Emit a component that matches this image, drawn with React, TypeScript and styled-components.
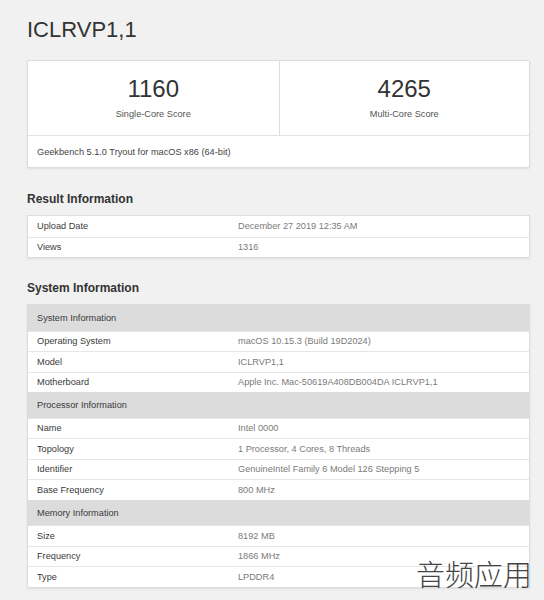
import styled, { createGlobalStyle } from "styled-components";

const GlobalStyle = createGlobalStyle`
  html, body {
    margin: 0;
    padding: 0;
    background-color: #f1f1f1;
    font-family: "Liberation Sans", Arial, sans-serif;
    color: #333333;
  }
`;

const Page = styled.div`
  position: relative;
  display: flex;
  flex-direction: column;
  min-height: 600px;
  padding: 17px 14px 0 27px;
  box-sizing: border-box;
`;

const Title = styled.h1`
  margin: 0;
  font-size: 22px;
  line-height: 26px;
  font-weight: 400;
  color: #333333;
`;

const Card = styled.div`
  margin-top: 17px;
  background-color: #ffffff;
  border: 1px solid #dddddd;
  border-radius: 2px;
  box-shadow: 0 1px 2px rgba(0, 0, 0, 0.08);
`;

const ScoreRow = styled.div`
  display: grid;
  grid-template-columns: 1fr 1fr;
`;

const ScoreCell = styled.div`
  display: flex;
  flex-direction: column;
  align-items: center;
  padding: 14px 0 15px;
  gap: 5px;
  & + & {
    border-left: 1px solid #dddddd;
  }
`;

const ScoreValue = styled.span`
  font-size: 24px;
  line-height: 28px;
  color: #333333;
`;

const ScoreLabel = styled.span`
  font-size: 9.2px;
  line-height: 12px;
  color: #555555;
`;

const CardFooter = styled.div`
  display: flex;
  align-items: center;
  height: 31px;
  padding-left: 9px;
  border-top: 1px solid #e3e3e3;
  font-size: 9.2px;
  color: #444444;
`;

const SectionTitle = styled.h2<{ $top: number }>`
  margin: ${(p) => p.$top}px 0 8px;
  font-size: 12px;
  line-height: 16px;
  font-weight: 700;
  color: #333333;
`;

const Table = styled.div`
  background-color: #ffffff;
  border: 1px solid #dddddd;
  box-shadow: 0 1px 2px rgba(0, 0, 0, 0.08);
`;

const Row = styled.div<{ $header?: boolean }>`
  display: grid;
  grid-template-columns: 201px 1fr;
  align-items: center;
  box-sizing: border-box;
  height: ${(p) => (p.$header ? "25.5px" : "20.5px")};
  padding-left: 9px;
  background-color: ${(p) => (p.$header ? "#dcdcdc" : "#ffffff")};
  border-top: 1px solid ${(p) => (p.$header ? "#dcdcdc" : "#e6e6e6")};
  font-size: 9.2px;
  &:first-child {
    border-top: none;
  }
`;

const Label = styled.span`
  color: #3a3a3a;
`;

const Value = styled.span`
  color: #7a7a7a;
`;

const Watermark = styled.div`
  position: absolute;
  left: 416px;
  top: 556px;
  font-family: "Noto Sans CJK SC", sans-serif;
  font-weight: 200;
  font-size: 29px;
  line-height: 34px;
  color: #444444;
  pointer-events: none;
`;

type Entry = { label: string; value?: string; header?: boolean };

const resultInfo: Entry[] = [
  { label: "Upload Date", value: "December 27 2019 12:35 AM" },
  { label: "Views", value: "1316" },
];

const systemInfo: Entry[] = [
  { label: "System Information", header: true },
  { label: "Operating System", value: "macOS 10.15.3 (Build 19D2024)" },
  { label: "Model", value: "ICLRVP1,1" },
  { label: "Motherboard", value: "Apple Inc. Mac-50619A408DB004DA ICLRVP1,1" },
  { label: "Processor Information", header: true },
  { label: "Name", value: "Intel 0000" },
  { label: "Topology", value: "1 Processor, 4 Cores, 8 Threads" },
  { label: "Identifier", value: "GenuineIntel Family 6 Model 126 Stepping 5" },
  { label: "Base Frequency", value: "800 MHz" },
  { label: "Memory Information", header: true },
  { label: "Size", value: "8192 MB" },
  { label: "Frequency", value: "1866 MHz" },
  { label: "Type", value: "LPDDR4" },
];

const InfoTable = ({ rows }: { rows: Entry[] }) => (
  <Table>
    {rows.map((r) => (
      <Row key={r.label} $header={r.header}>
        <Label>{r.label}</Label>
        {r.value && <Value>{r.value}</Value>}
      </Row>
    ))}
  </Table>
);

export default function App() {
  return (
    <>
      <GlobalStyle />
      <Page>
        <Title>ICLRVP1,1</Title>
        <Card>
          <ScoreRow>
            <ScoreCell>
              <ScoreValue>1160</ScoreValue>
              <ScoreLabel>Single-Core Score</ScoreLabel>
            </ScoreCell>
            <ScoreCell>
              <ScoreValue>4265</ScoreValue>
              <ScoreLabel>Multi-Core Score</ScoreLabel>
            </ScoreCell>
          </ScoreRow>
          <CardFooter>Geekbench 5.1.0 Tryout for macOS x86 (64-bit)</CardFooter>
        </Card>

        <SectionTitle $top={23}>Result Information</SectionTitle>
        <InfoTable rows={resultInfo} />

        <SectionTitle $top={22}>System Information</SectionTitle>
        <InfoTable rows={systemInfo} />

        <Watermark>音频应用</Watermark>
      </Page>
    </>
  );
}
